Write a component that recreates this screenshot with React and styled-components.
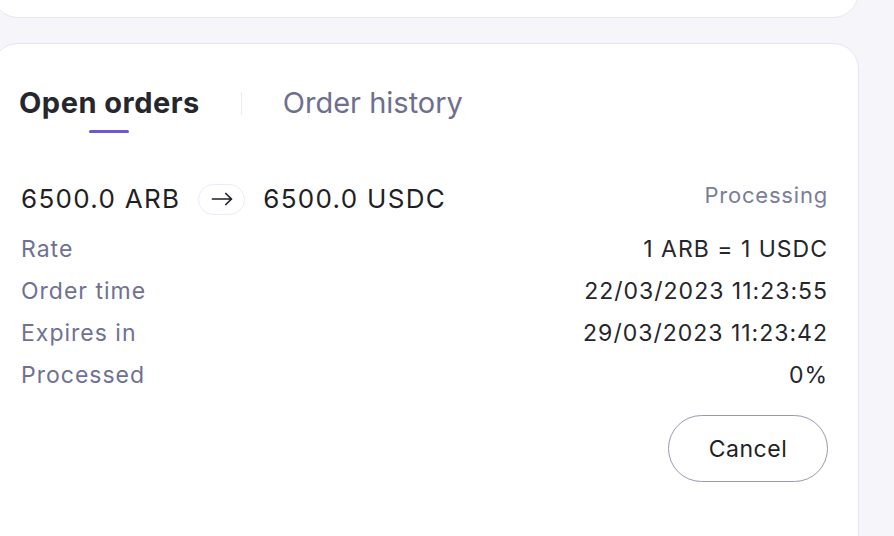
import React from "react";
import styled, { createGlobalStyle } from "styled-components";

const GlobalStyle = createGlobalStyle`
  body {
    margin: 0;
    background: #f5f5fa;
    font-family: Inter, "Noto Sans", sans-serif;
    color: #1f1f26;
  }
`;

const Page = styled.div`
  display: flex;
  flex-direction: column;
  gap: 25px;
  width: 867px;
  margin-left: -8px;
`;

const TopCard = styled.section`
  box-sizing: border-box;
  height: 58px;
  margin-top: -40px;
  background: #fff;
  border: 1px solid #e6e4f8;
  border-radius: 26px;
`;

const Card = styled.section`
  background: #fff;
  border: 1px solid #e6e4f8;
  border-radius: 26px;
  padding: 42px 30px 80px 28px;
`;

const Tabs = styled.nav`
  display: flex;
  align-items: center;
  gap: 41px;
  height: 34px;
  margin-left: -2px;
`;

const Tab = styled.button`
  position: relative;
  padding: 0;
  border: none;
  background: none;
  font-family: inherit;
  font-size: 29px;
  line-height: 34px;
  letter-spacing: ${props => (props.active ? "0.5px" : "0")};
  font-weight: ${props => (props.active ? 650 : 400)};
  color: ${props => (props.active ? "#26262d" : "#6e6f90")};
  cursor: pointer;

  &::after {
    content: "";
    display: ${props => (props.active ? "block" : "none")};
    position: absolute;
    left: 50%;
    bottom: -13px;
    width: 40px;
    height: 3px;
    border-radius: 2px;
    transform: translateX(-50%);
    background: #6b58d6;
  }
`;

const Divider = styled.span`
  width: 1px;
  height: 23px;
  background: #ececf1;
`;

const OrderHead = styled.div`
  display: flex;
  align-items: center;
  height: 32px;
  margin-top: 63px;
`;

const Amount = styled.span`
  font-size: 26px;
  line-height: 32px;
  letter-spacing: 1.3px;
  color: #1f1f26;
`;

const ArrowPill = styled.span`
  box-sizing: border-box;
  display: flex;
  align-items: center;
  justify-content: center;
  width: 47px;
  height: 31px;
  margin: 0 18px;
  border: 1.5px solid #ecebfa;
  border-radius: 16px;
  color: #1f1f26;
`;

const Status = styled.span`
  align-self: flex-start;
  margin-left: auto;
  margin-top: -2px;
  font-size: 22px;
  line-height: 28px;
  letter-spacing: 0.8px;
  color: #7b7d9a;
`;

const Details = styled.dl`
  margin: 13px 0 0;
`;

const Row = styled.div`
  display: flex;
  justify-content: space-between;
  align-items: center;
  height: 42px;
  font-size: 23px;
  letter-spacing: 1px;
`;

const Label = styled.dt`
  color: #6f7193;
`;

const Value = styled.dd`
  margin: 0;
  color: #25252d;
`;

const Actions = styled.div`
  display: flex;
  justify-content: flex-end;
  margin-top: 19px;
`;

const CancelButton = styled.button`
  width: 160px;
  height: 67px;
  border: 1px solid #9a98b3;
  border-radius: 34px;
  background: #fff;
  font-family: inherit;
  font-size: 23px;
  letter-spacing: 0.5px;
  color: #1f1f26;
  cursor: pointer;
`;

const Arrow = () => (
  <svg width="22" height="14" viewBox="0 0 22 14" fill="none">
    <path
      d="M1.5 7h19M14.8 1.5L20.5 7l-5.7 5.5"
      stroke="currentColor"
      strokeWidth="1.7"
      strokeLinecap="round"
      strokeLinejoin="round"
    />
  </svg>
);

const details = [
  ["Rate", "1 ARB = 1 USDC"],
  ["Order time", "22/03/2023 11:23:55"],
  ["Expires in", "29/03/2023 11:23:42"],
  ["Processed", "0%"],
];

export default function App() {
  return (
    <>
      <GlobalStyle />
      <Page>
        <TopCard />
        <Card>
          <Tabs>
            <Tab active>Open orders</Tab>
            <Divider />
            <Tab>Order history</Tab>
          </Tabs>

          <OrderHead>
            <Amount>6500.0 ARB</Amount>
            <ArrowPill>
              <Arrow />
            </ArrowPill>
            <Amount>6500.0 USDC</Amount>
            <Status>Processing</Status>
          </OrderHead>

          <Details>
            {details.map(([label, value]) => (
              <Row key={label}>
                <Label>{label}</Label>
                <Value>{value}</Value>
              </Row>
            ))}
          </Details>

          <Actions>
            <CancelButton>Cancel</CancelButton>
          </Actions>
        </Card>
      </Page>
    </>
  );
}
